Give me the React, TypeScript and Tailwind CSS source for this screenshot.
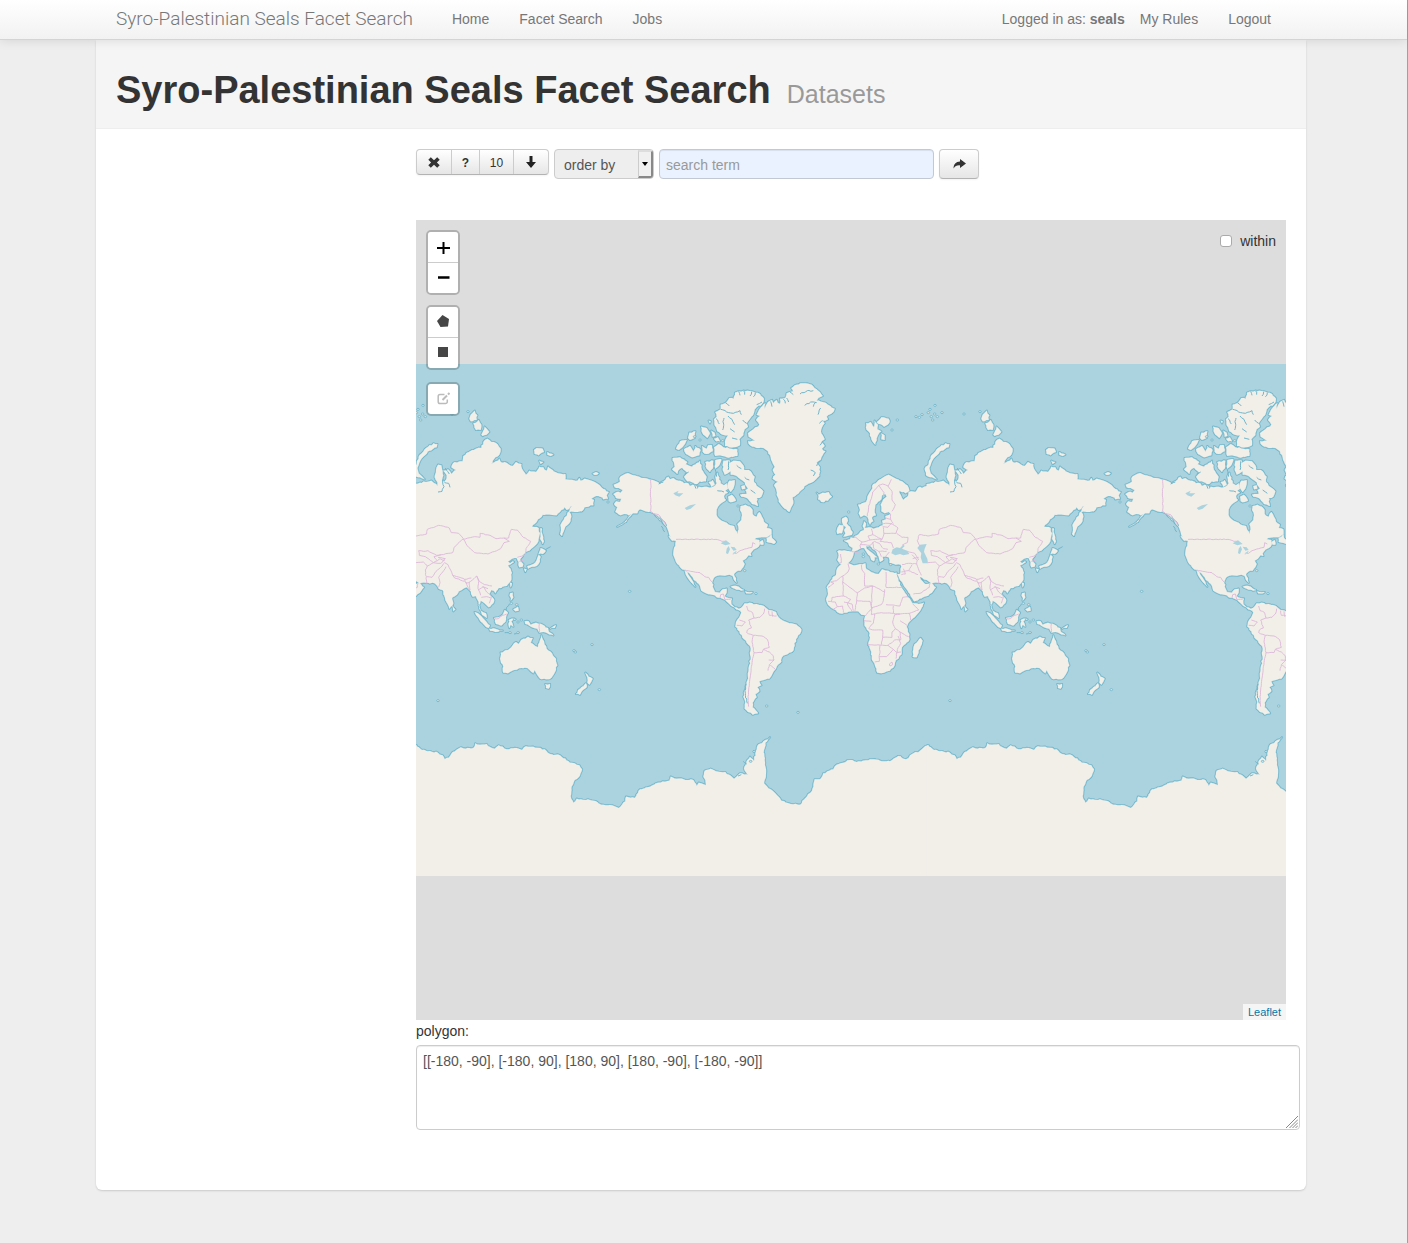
import React from "react";

type Segment = [dx: number, dy: number, points: string];

// Map drawing units are thirds of a pixel. Each region has its own origin.
const A = (p: string): Segment => [0, 0, p];
const B = (p: string): Segment => [660, 0, p];
const C = (p: string): Segment => [960, 90, p];
const D = (p: string): Segment => [240, 570, p];
const E = (p: string): Segment => [-570, 990, p];

// Repeatable pseudo-random offset in -1..1, used to roughen coastlines.
function noise(x: number, y: number) {
  const v = Math.sin(x * 12.9898 + y * 78.233) * 43758.5453;
  return (v - Math.floor(v)) * 2 - 1;
}

function toPath(segments: Segment[], close: boolean, rough = 0) {
  const pts: [number, number][] = [];
  segments.forEach(([dx, dy, text]) => {
    const n = text.trim().split(/\s+/).map(Number);
    for (let i = 0; i + 1 < n.length; i += 2) pts.push([n[i] + dx, n[i + 1] + dy]);
  });
  const out: string[] = [];
  pts.forEach(([x, y], i) => {
    out.push(`${x} ${y}`);
    const next = pts[i + 1] ?? (close ? pts[0] : undefined);
    if (!next || !rough) return;
    const length = Math.hypot(next[0] - x, next[1] - y);
    if (length > 150) return;
    const steps = Math.floor(length / 6);
    for (let s = 1; s < steps; s++) {
      const px = x + ((next[0] - x) * s) / steps;
      const py = y + ((next[1] - y) * s) / steps;
      out.push(`${(px + noise(px, py) * rough).toFixed(1)} ${(py + noise(py, px) * rough).toFixed(1)}`);
    }
  });
  return "M" + out.join("L") + (close ? "Z" : "");
}

const land: Segment[][] = [
  // North America
  [A("41 344 60 335 58 325 68 316 84 309 97 315 110 318 130 324 152 329 168 334 180 341 190 334 205 320 210 328 220 324 228 330 240 332 252 340 265 340 270 348 278 344 290 348 292 358 296 350 305 352 320 350 330 353 340 350 350 340 346 320 352 308 358 322 362 340 372 346 380 340 384 356 376 362 384 368 372 378 378 390 366 398 354 410 350 425 352 440 365 452 380 458 392 466 402 468 406 480 414 492 416 478 412 462 424 450 426 436 420 420 422 408 436 404 450 410 458 420 458 432 470 440 478 426 486 440 492 455 504 464 500 474 514 478 514 492 500 502 484 502 468 504 454 514 466 508 478 510 480 522 476 530 462 538 452 550 454 558 446 556 438 566 428 572 434 582 430 592 422 602 408 606 402 612 408 625 410 638 402 630 398 618 388 614 375 617 360 616 345 620 338 632 338 650 345 666 360 668 368 658 380 656 380 668 374 678 386 684 396 686 394 702 404 712 416 716 428 714 420 722 408 718 394 708 386 700 376 690 362 684 350 682 336 674 318 670 304 662 300 648 288 634 278 622 268 610 254 600 240 592 228 576 222 560 221 540 226 520 228 512 220 508 208 496 206 486 200 470 188 458 176 444 162 430 150 425 136 424 120 418 112 430 100 430 86 440 78 456 60 466 52 470 70 460 84 446 96 432 86 436 72 432 62 436 46 426 52 412 42 402 48 394 60 396 64 386 48 384 40 372 50 366 62 368 68 360 56 354 44 352")],
  [A("254 602 262 622 276 640 286 650 280 636 268 618 262 606")],
  [A("478 516 488 510 490 524 482 524")],
  [A("500 504 508 500 512 488 516 504 528 516 522 522 510 518 500 516")],
  [A("206 498 216 500 228 512 216 512")],
  // Greenland
  [A("590 44 610 40 635 44 650 58 668 78 655 84 650 92 668 96 684 104 704 116 696 130 680 140 684 148 668 152 674 160 666 172 664 190 674 208 664 216 674 228 666 236 676 244 668 256 662 270 650 278 660 292 658 318 640 335 620 345 605 360 590 374 578 382 580 400 568 426 552 415 540 400 530 375 528 356 522 346 534 335 518 326 526 314 518 300 524 290 518 280 512 262 504 244 490 234 470 234 450 226 444 214 466 212 446 200 444 190 460 178 478 164 468 150 480 138 470 134 478 118 496 100 494 116 504 96 516 90 520 100 530 90 540 102 540 86 556 84 560 70 580 64 574 54")],
  // Canadian Arctic
  [A("405 68 416 64 430 62 455 64 480 72 492 86 486 102 470 112 462 128 450 146 440 160 444 170 434 178 430 196 418 208 420 226 400 232 375 228 376 210 384 196 368 194 352 184 344 166 342 148 350 140 346 126 362 118 362 104 380 96 388 84 402 86")],
  [A("356 222 370 232 412 238 412 258 380 262 360 256 346 258 342 232")],
  [A("303 170 320 174 330 190 322 204 310 194")],
  [A("334 182 344 188 346 198 338 200")],
  [A("326 152 332 154 330 160")],
  [A("342 206 354 202 360 214 348 214")],
  [A("228 236 240 214 260 210 252 226 236 240")],
  [A("252 238 270 228 282 246 286 228 302 240 298 256 276 262 258 252")],
  [A("264 204 268 188 286 184 284 204 270 210")],
  [A("306 228 320 236 324 226 336 226 338 244 320 252 308 246")],
  [A("216 298 224 290 218 264 240 262 262 276 250 292 240 296 232 312")],
  [A("246 292 256 282 276 290 300 272 306 300 320 320 318 334 300 334 292 342 262 334 252 320 262 308")],
  [A("316 276 340 272 338 296 330 306 320 296")],
  [A("346 270 364 268 358 286 346 296")],
  [A("326 336 338 330 344 344 334 350")],
  [A("370 272 390 272 388 280 400 272 420 274 430 286 432 300 446 300 464 320 462 336 474 350 490 364 484 380 470 384 474 408 456 402 440 384 424 380 420 374 440 372 436 360 444 356 430 334 410 318 392 314 392 304 374 314 368 296")],
  [A("388 332 404 330 402 350 392 366 382 348")],
  [A("424 348 434 346 436 356 426 358")],
  [A("384 380 396 374 408 392 398 396 386 394")],
  // Iceland
  [A("650 368 656 374 668 368 686 366 696 380 684 392 664 396 654 388 656 380")],
  // Caribbean
  [A("392 650 410 648 432 660 424 662 404 656")],
  [A("436 664 458 666 454 670 438 670")],
  // British Isles
  [B("66 446 78 440 84 452 80 460 90 470 98 486 96 494 82 498 70 500 76 490 72 480 78 472 70 466 66 456")],
  [B("52 474 58 464 70 466 70 476 66 490 52 492 50 484")],
  // Eurasia
  [
    B("60 582 52 570 56 556 52 544 66 542 88 543 96 543 98 534 88 528 84 518 72 512 90 508 92 502 104 504 104 498 116 492 122 484 132 480 128 468 132 454 138 460 134 474 146 472 160 476 176 472 188 466 186 452 198 448 196 438 212 432 206 426 194 430 184 424 182 404 190 388 200 380 196 372 186 376 184 388 166 404 164 420 168 436 156 442 160 454 150 464 146 456 142 440 132 436 122 442 116 430 120 420 114 404 126 400 138 396 142 380 154 360 160 342 176 330 190 322 206 314 220 322 240 332 262 346 268 362 256 370 238 362 242 374 250 390 264 378 266 366 286 366 300 350 306 354 320 348 320 342 336 338 354 336 370 332 388 348 388 336 380 322 384 300 390 284 400 286 404 304 404 330 410 340 416 316 406 302 420 298 430 312 444 300 430 292 440 276 464 274 466 258 486 244 504 236 520 234 526 216 538 206 550 216 568 222 578 236 576 250 562 262 548 282 570 272 574 266 578 276 590 276 614 288 624 276 640 282 642 296 654 314 664 302 684 306 694 290 706 292 716 302 720 290 734 300 750 310 772 312"),
    C("472 238 508 242 514 234 518 242 530 236 544 240 560 246 570 252 580 262 602 276 596 286 600 296 586 298 576 290 564 288 550 296 558 300 556 316 530 322 522 334 500 336 484 336 490 350 484 370 472 380 462 408 456 402 460 370 470 352 484 334 492 318 476 330 470 322 456 336 446 346 428 344 404 344 388 362 372 380 392 384 396 400 388 430 370 446 352 458 346 464 336 480 346 492 344 500 334 502 332 486 326 474 312 476 300 484 306 490 314 484 318 486 300 496 312 518 310 540 296 558 272 564 262 574 250 570 244 582 258 598 256 610 242 622 234 614 228 608 218 602 212 616 218 632 234 640 236 654 222 644 214 626 212 606 204 588 194 590 184 570 176 562 164 568 150 580 134 592 134 616 124 626 112 600 104 570 92 566 88 558 80 550 60 548 34 550 20 540 0 530"),
    B("300 616 302 628 316 642 334 638 348 652 336 668 310 682 282 694 276 684 266 668 250 644 236 620 232 612 240 612 244 590 242 584 222 582 208 578 206 562 198 560 188 560 190 570 180 576 176 560 164 540 150 528 138 528 140 536 156 548 172 562 164 562 162 574 154 570 150 558 138 544 132 534 120 536 104 544 100 556 92 572 84 580 68 582"),
  ],
  [B("388 222 376 220 350 238 332 260 326 282 314 296 318 316 336 322 350 328 332 310 328 294 334 278 346 260 364 242 386 232")],
  [B("138 160 152 156 162 172 164 152 174 164 172 178 184 184 172 200 166 224 154 208 150 190 140 180")],
  [B("170 156 184 142 206 146 208 158 192 170")],
  [B("184 190 194 196 194 210 184 208")],
  [B("488 134 500 122 508 136 506 150 488 154 484 146")],
  [B("496 160 512 150 520 164 518 180 504 180")],
  [B("520 194 530 170 544 186 536 194 524 198")],
  [B("678 240 686 234 704 236 708 246 692 256 680 252")],
  [B("718 246 736 254 728 258 718 254")],
  [B("694 272 706 276 698 282")],
  [C("554 221 564 216 572 220 560 225")],
  // Japan and the western Pacific rim
  [C("398 384 402 386 402 400 408 424 404 432 398 420")],
  [C("392 462 398 444 414 452 404 462")],
  [C("392 464 398 470 396 484 386 498 372 500 360 506 358 498 376 492 386 480")],
  [C("348 506 356 508 352 516")],
  [C("306 548 312 550 308 562")],
  [C("258 572 266 572 262 580")],
  [C("306 580 314 578 316 592 308 602")],
  [C("316 628 330 620 332 632 322 634")],
  [C("200 636 210 640 228 658 246 676 242 684 228 674 212 654")],
  [C("244 686 262 686 284 692 262 696 246 692")],
  [C("258 654 272 652 284 644 290 630 300 638 294 652 292 666 282 676 264 672")],
  [C("302 660 310 656 322 658 310 664 316 680 308 674 304 684")],
  [C("350 664 362 664 368 674 384 668 404 674 420 684 422 694 436 706 418 700 406 696 394 698 388 686 372 682 352 672")],
  [C("426 686 444 676 440 684")],
  [C("134 618 142 628 136 634")],
  // Australia and New Zealand
  [C("278 758 300 750 314 736 318 730 324 726 332 732 346 716 352 716 360 710 374 714 368 728 382 738 390 742 396 720 400 706 408 724 416 746 432 760 444 776 448 796 440 818 430 834 414 838 396 836 386 822 380 810 376 820 368 814 358 804 340 804 318 810 300 820 286 818 286 800 276 776")],
  [C("412 852 418 854 426 852 422 866 414 864")],
  [C("532 818 542 830 554 836 544 854 538 848 538 832")],
  [C("534 850 536 862 520 876 516 884 504 882 516 866")],
  // South America
  [D("180 146 194 130 208 128 230 132 252 138 266 150 288 156 296 172 310 182 334 190 350 194 364 208 360 222 348 238 342 262 336 276 318 284 306 292 304 306 290 320 280 336 268 356 252 360 238 364 244 376 232 382 238 394 226 402 230 412 218 428 218 442 234 460 218 464 204 456 194 446 196 426 190 410 200 372 206 330 212 290 210 258 192 238 178 214 166 200 168 186 178 172 184 158")],
  // Africa
  [D("488 8 504 10 520 16 540 12 556 10 560 28 580 38 596 42 606 28 630 36 650 38 652 50 664 80 680 104 698 130 716 132 732 128 722 150 704 172 690 184 680 200 688 222 686 244 666 262 664 284 648 300 644 316 630 332 612 338 592 338 586 320 576 300 574 276 564 254 570 232 566 214 554 198 552 180 556 166 544 164 534 154 516 154 500 158 478 160 462 148 444 134 438 118 444 100 440 82 452 62 468 44 472 24")],
  [D("704 252 722 234 728 242 720 266 710 292 698 290 700 268")],
  // Antarctica
  [
    E("16 136 36 150 60 153 84 158 90 164 98 166 104 178 120 168 128 156 152 142 166 146 190 144 196 130 210 134 230 132 234 138 254 146 266 136 290 148 320 144 336 150 342 142 354 140 370 140 404 148 420 162 450 166 480 188 494 190 508 196 516 208 506 232 494 240 484 264 482 288 490 308 500 296 540 300 562 306 574 314 612 318 626 324 646 304 648 290 674 294 690 268 720 260 744 248 778 242 782 230 800 236 850 240 860 258 866 248 888 256 886 240 880 230 884 212 902 206 918 214 946 216 972 236 990 220 1014 226 1002 206 1012 180 1020 170 1032 184 1036 160 1044 134 1060 124 1080 112 1066 128 1062 150 1064 180 1068 220 1062 250 1092 276 1114 302 1136 310 1170 314 1186 294 1206 272 1214 238 1230 238"),
    D("430 640 460 628 470 614 490 608 510 600 530 606 576 598 600 602 630 604 655 588 666 594 678 598 690 586 700 580 720 572 736 558 746 556 746 960"),
    E("16 560"),
  ],
];

const islets: [number, number][] = [
  [948, 140], [958, 142], [966, 134], [985, 128], [994, 140], [1004, 132], [1012, 140], [1026, 128], [1005, 106], [990, 118], [998, 150],
  [1092, 132], [1140, 125], [892, 150], [876, 180], [746, 426], [790, 552], [790, 560], [835, 582], [872, 584], [89, 664],
  [1050, 992], [1512, 824], [1458, 842], [1462, 846], [1534, 959], [500, 1008], [594, 1027], [462, 1145], [452, 1174], [284, 200], [300, 210], [368, 212],
  [434, 602], [468, 671], [414, 408], [1270, 700], [1286, 704], [1280, 748], [1300, 750], [1290, 756], [1290, 788], [1266, 788], [1560, 396],
];

const inlets: Segment[] = [
  B("404 328 408 350 402 364 390 366"),
  B("410 338 422 340 426 352"),
  C("112 204 124 222"),
  C("294 630 304 612"),
  C("412 450 428 440"),
  C("290 698 310 700"),
  C("318 702 336 696"),
  A("416 64 420 76"), A("430 62 434 74"), A("455 65 450 78"), A("466 68 460 80"), A("376 98 388 108"),
  A("362 118 380 126 400 130 420 122 424 134"), A("384 138 396 148 404 164"), A("390 176 404 186"), A("486 96 470 104"),
  A("348 146 358 162"), A("372 144 368 180"), A("396 204 412 208"), A("440 160 428 150"),
  A("600 72 622 62 640 62"), A("614 106 632 96 650 98"), A("640 110 648 96"), A("654 134 662 114"),
  A("560 84 566 96"), A("550 88 556 100"), A("570 66 580 74"), A("512 94 516 110"), A("632 300 646 308 640 318"), A("660 272 650 288"),
  A("668 214 660 226"), A("668 152 658 160"), A("162 432 178 444 190 460"), A("180 440 190 452 200 468"), A("184 468 194 486"),
  A("190 336 176 342"), A("346 300 350 320"), A("254 312 266 306"), A("386 274 384 300"), A("410 286 424 296"),
  A("434 322 448 330"), A("452 360 466 370"), A("352 362 372 366"), A("284 346 288 356"),
  D("198 372 196 400 202 430"),
  E("1000 184 1010 192"), E("1030 150 1034 158"), E("984 228 994 224"),
];

const lakes: Segment[] = [
  B("214 550 218 538 230 532 240 534 250 524 254 528 246 536 262 542 268 552 250 556 240 552 226 556"),
  B("292 534 300 524 320 522 314 536 312 546 322 566 324 580 308 580 302 562 304 550"),
  A("362 520 378 511 392 522 376 526"),
  A("386 528 390 538 384 552 378 550 380 536"),
  A("392 530 404 532 410 540 400 542"),
  A("398 550 410 542 408 548"),
  A("254 414 270 406 288 402 272 416 260 420"),
  A("220 370 236 362 232 370 250 370 238 380 226 376"),
];

const borders: Segment[] = [
  // The Americas
  A("152 329 152 425 162 432 176 434 184 446 200 466"),
  A("228 508 348 508 366 514 378 514"),
  A("398 552 410 550 420 542 440 536 456 532 458 518 466 522"),
  A("254 600 272 604 300 608 314 620 326 622 336 636"),
  A("360 684 362 674 370 672 374 688 392 688"),
  D("200 138 204 152 218 158 222 174 240 172 250 162 254 146"),
  D("266 152 268 166 290 168"), D("276 154 278 170"), D("222 174 206 180 214 204 202 210 200 218 220 226"),
  D("170 196 186 198 196 186 178 180"), D("220 226 246 228 262 238 268 262 250 268 246 278 222 278"),
  D("220 226 216 246 222 278 214 320 208 370 204 410 206 440"), D("250 268 268 276 280 288 282 300 266 300"), D("282 300 268 314 264 332"), D("270 314 286 328"),
  // Africa
  D("452 66 470 62 488 48 504 36 508 26 504 12"), D("488 48 490 108 456 112 454 124"), D("452 66 462 70 444 82"), D("488 66 532 98 554 84 578 78"),
  D("544 14 546 30 554 40 554 78 578 78 614 96 614 88"), D("618 36 618 82 668 82"), D("614 96 610 122 604 134 574 144 576 98 578 78"), D("618 134 660 138 668 112 684 110"),
  D("532 98 530 122 570 124"), D("530 122 524 156"), D("490 108 512 118 502 132 516 154"), D("444 124 466 126 472 140 460 148"), D("472 140 488 138 490 158"),
  D("492 126 516 132 520 152"), D("570 124 576 144 556 168"), D("576 144 574 164 604 158 640 160 640 138"), D("584 162 580 190 566 204"), D("552 182 574 184"),
  D("566 206 584 210 608 210 608 232 636 232 636 216 646 206 638 186 644 164 660 162"), D("640 160 660 162 688 160 692 180"), D("688 160 716 150 698 132"), D("660 182 684 198"),
  D("646 206 660 216 686 230"), D("564 254 624 256 644 240 662 240 660 216"), D("608 232 604 254"), D("600 256 598 304 584 306"), D("598 290 620 290 640 268 624 256"),
  D("640 268 652 278 664 276"), D("654 228 662 250 652 268 648 296"), D("628 312 636 306 638 314 630 318 628 312"),
  // Europe
  B("62 552 64 578 56 580"), B("88 543 122 550"), B("104 500 116 510 126 516 120 526 122 536"), B("154 476 158 494 144 498 150 510 126 516"), B("158 494 186 508 192 492 190 472"),
  B("122 524 150 526 164 514 178 520 190 536 204 538"), B("186 508 180 514 214 518 220 534"), B("150 510 166 508 186 508"), B("158 516 160 534 176 544 184 560"), B("176 544 200 544"), B("196 562 208 546"),
  B("142 438 146 408 154 386 158 366 176 346 188 342 204 348 214 328"), B("176 346 192 368 190 378"), B("204 348 216 364 216 390 226 404 216 424"),
  B("198 444 212 448 212 432"), B("186 460 204 460 216 462"), B("188 470 204 472 214 460 234 474 228 490 192 490"), B("230 490 246 502 264 502 262 518 246 526"), B("212 448 220 460"),
  // Middle East and Asia
  B("246 584 266 580 290 582 292 570 276 554"), B("262 544 284 550 296 570"), B("278 566 296 562"), B("244 606 266 602 276 584"), B("244 614 256 612 250 596"), B("266 602 294 614"), B("290 582 298 604 304 616"),
  B("280 672 300 670 328 652 330 640"),
  B("300 534 292 512 298 494 324 498 356 492 358 478 392 466 424 474 430 488 452 490 466 506 450 520 438 532 434 548 400 554 386 556 360 542 346 544 332 542"),
  B("332 542 334 556 352 560 376 578 388 572 378 560 400 554"), B("324 578 346 576 358 588 376 578 398 580 412 566 390 562"),
  B("358 588 352 600 356 640"), B("356 620 372 622 384 604 398 592 410 578 420 584 428 600"), B("392 652 396 638 392 622 404 606 414 590"), B("388 572 396 566 410 572"),
  B("466 508 500 500 516 502 516 490 546 496 564 506 588 504 604 514 588 518 578 536 540 552 500 548 482 532 466 508"),
  B("588 504 602 504 610 478 628 480 646 502 668 514 654 536 652 554 628 562"),
  B("428 600 434 616 470 628 474 640 488 634 506 618 514 634 530 644 552 648"), B("434 616 440 624 470 634"), B("470 628 490 624"), B("474 636 480 652 486 660 484 636"),
  B("506 618 512 634 510 656 518 676"), B("510 660 526 650 536 666 550 678 544 700"), B("520 682 536 680 548 684"), B("524 650 540 656"),
  C("260 656 272 656 284 646 296 642"), C("394 672 394 698"), C("334 484 346 480"),
];

const landPaths = land.map((s) => toPath(s, true, 2));
const inletPath = inlets.map((s) => toPath([s], false, 2)).join("");
const lakePath = lakes.map((s) => toPath([s], true)).join("");
const borderPath = borders.map((s) => toPath([s], false, 1)).join("");
const repeats = [-1536, 0, 1536];

function WorldMap() {
  return (
    <svg
      className="block h-[512px] w-full bg-[#aad3df]"
      viewBox="-552 -18 2610 1536"
      preserveAspectRatio="xMidYMid slice"
      role="img"
      aria-label="World map"
    >
      <defs>
        <g id="coast">
          {landPaths.map((d, i) => (
            <path key={i} d={d} />
          ))}
        </g>
        <g id="detail">
          <path d={inletPath} fill="none" stroke="#6fb6cb" strokeWidth="3" />
          <path d={lakePath} fill="#aad3df" />
          {islets.map(([x, y], i) => (
            <ellipse key={i} cx={x} cy={y} rx="4" ry="3" fill="#e2e8e4" stroke="#6fb6cb" strokeWidth="2.6" />
          ))}
          <path d={borderPath} fill="none" stroke="#deb9da" strokeWidth="2.8" />
        </g>
      </defs>
      <g fill="none" stroke="#6fb6cb" strokeWidth="6.6" strokeLinejoin="round">
        {repeats.map((x) => (
          <use key={x} href="#coast" x={x} />
        ))}
      </g>
      <g fill="#f2efe9" stroke="#f2efe9" strokeWidth="1">
        {repeats.map((x) => (
          <use key={x} href="#coast" x={x} />
        ))}
      </g>
      {repeats.map((x) => (
        <use key={x} href="#detail" x={x} />
      ))}
    </svg>
  );
}

const smallButton =
  "flex h-full items-center justify-center border-r border-[#ccc] text-[12px] text-[#333] last:border-r-0";
const mapButton = "flex h-[30px] w-[30px] items-center justify-center bg-white";
const mapBar = "w-[34px] overflow-hidden rounded-[5px] border-2 border-black/20 bg-clip-padding";
const navLink = "px-[15px] text-[14px] leading-5 text-[#777]";

function MapControls() {
  return (
    <div className="absolute top-2.5 left-2.5 flex flex-col gap-2.5">
      <div className={mapBar}>
        <button type="button" aria-label="Zoom in" className={`${mapButton} h-[31px] border-b border-[#ccc]`}>
          <svg width="16" height="16" viewBox="0 0 16 16" stroke="#000" strokeWidth="2">
            <path d="M2 9h13M8.500 3v12" />
          </svg>
        </button>
        <button type="button" aria-label="Zoom out" className={mapButton}>
          <svg width="14" height="14" viewBox="0 0 14 14" stroke="#000" strokeWidth="2.500">
            <path d="M2 6.500h11.500" />
          </svg>
        </button>
      </div>
      <div className={mapBar}>
        <button type="button" aria-label="Draw a polygon" className={`${mapButton} h-[31px] border-b border-[#ccc] pb-0.5`}>
          <svg width="12" height="12" viewBox="0 0 12 12" fill="#464646">
            <path d="M5.500 0l6.500 4-1 7.500-7.500.5L0 6z" />
          </svg>
        </button>
        <button type="button" aria-label="Draw a rectangle" className={`${mapButton} pb-0.5`}>
          <span className="size-2.5 bg-[#464646]" />
        </button>
      </div>
      <div className={`${mapBar} mt-0.5`}>
        <button type="button" disabled aria-label="Edit layers" className={`${mapButton} bg-[#f4f4f4] pb-0.5`}>
          <svg width="13" height="13" viewBox="0 0 13 13" fill="none" stroke="#bbb" strokeWidth="1.500">
            <path d="M7.500 2.500H3A1.800 1.800 0 0 0 1.200 4.300v5.400A1.800 1.800 0 0 0 3 11.500h5.500a1.800 1.800 0 0 0 1.800-1.800V7.500" />
            <path d="M5.500 8L10 3.500" strokeWidth="2" />
            <path d="M11 2.500l1.500-1.500" strokeWidth="2" />
          </svg>
        </button>
      </div>
    </div>
  );
}

export default function App() {
  return (
    <div className="min-h-screen border-r border-[#a0a0a0] bg-[#eee] font-['Liberation_Sans',Arial,sans-serif] text-[14px] leading-5 text-[#333]">
      <header className="relative z-10 h-10 border-b border-[#d4d4d4] bg-linear-to-b from-white to-[#f2f2f2] pr-[5px] pb-0.5 shadow-[0_1px_10px_rgba(0,0,0,0.1)]">
        <div className="mx-auto flex h-full max-w-[1170px] items-center justify-between">
          <nav className="flex items-center">
            <a href="#" className="mr-6 font-[Roboto,sans-serif] text-[19px] leading-5 font-light whitespace-nowrap text-[#777]">
              Syro-Palestinian Seals Facet Search
            </a>
            <a href="#" className={navLink}>Home</a>
            <a href="#" className={navLink}>Facet Search</a>
            <a href="#" className={navLink}>Jobs</a>
          </nav>
          <div className="flex items-center">
            <span className="text-[#777]">
              Logged in as: <b>seals</b>
            </span>
            <a href="#" className={navLink}>My Rules</a>
            <a href="#" className={navLink}>Logout</a>
          </div>
        </div>
      </header>

      <div className="pr-[5px]">
        <main className="mx-auto max-w-[1210px] overflow-hidden rounded-b-md bg-white pb-[60px] shadow-[0_1px_2px_rgba(0,0,0,0.15)]">
          <div className="border-b border-[#eee] bg-[#f5f5f5] px-5 pt-[30px] pb-[18px]">
            <h1 className="flex items-baseline gap-4 text-[38px] leading-10 font-bold text-[#333]">
              Syro-Palestinian Seals Facet Search
              <small className="text-[25px] leading-none font-normal text-[#999]">Datasets</small>
            </h1>
          </div>

          <div className="pt-5 pr-5 pl-80">
            <form className="flex items-start gap-[5px]" onSubmit={(e) => e.preventDefault()}>
              <div className="flex h-[26px] w-[133px] overflow-hidden rounded-sm border border-[#ccc] border-b-[#b3b3b3] bg-linear-to-b from-white to-[#e6e6e6] shadow-[0_1px_2px_rgba(0,0,0,0.05)]">
                <button type="button" aria-label="Clear" className={`${smallButton} w-[35px]`}>
                  <svg width="12" height="11" viewBox="0 0 12 11" fill="#333">
                    <path d="M2.800.3L6 3.200 9.200.3l2.500 2.400L8.900 5.500l2.800 2.800-2.500 2.400L6 7.800l-3.200 2.900L.3 8.300l2.800-2.800L.3 2.700z" />
                  </svg>
                </button>
                <button type="button" className={`${smallButton} w-[28px] pt-0.5 font-bold`}>?</button>
                <button type="button" className={`${smallButton} w-[34px] pt-0.5`}>10</button>
                <button type="button" aria-label="Sort descending" className={`${smallButton} flex-1`}>
                  <svg width="10" height="12" viewBox="0 0 10 12" fill="#222">
                    <path d="M3.500 0h3v6H10l-5 6-5-6h3.500z" />
                  </svg>
                </button>
              </div>
              <div className="relative h-[30px] w-[100px]">
                <select
                  aria-label="Order by"
                  className="h-full w-full appearance-none rounded-sm border border-[#ccc] bg-[#eee] pt-0.5 pl-[9px] text-[14px] text-[#555]"
                >
                  <option>order by</option>
                </select>
                <span className="pointer-events-none absolute top-px right-px bottom-px flex w-[15px] items-center justify-center rounded-r-[3px] border-t-2 border-r-2 border-b-2 border-l border-t-[#ddd] border-r-[#888] border-b-[#888] border-l-[#ccc] bg-[#f0f0f0]">
                  <svg width="6" height="4" viewBox="0 0 6 4">
                    <path d="M0 0h6L3 4z" />
                  </svg>
                </span>
              </div>
              <input
                type="text"
                aria-label="Search term"
                placeholder="search term"
                className="h-[30px] w-[275px] rounded-sm border border-[#c3c9d4] bg-[#eaf2ff] px-1.5 pt-0.5 text-[14px] text-[#555] shadow-[inset_0_1px_1px_rgba(0,0,0,0.075)] placeholder:text-[#999]"
              />
              <button
                type="submit"
                aria-label="Search"
                className="flex h-[30px] w-10 items-center justify-center rounded-sm border border-[#ccc] border-b-[#b3b3b3] bg-linear-to-b from-white to-[#e6e6e6] shadow-[0_1px_2px_rgba(0,0,0,0.05)]"
              >
                <svg width="13" height="10" viewBox="0 0 13 10" fill="#333">
                  <path d="M7 0l6 4.500L7 9V6.400C4 6.200 2 7 .6 9.500.3 5.500 3 2.700 7 2.600z" />
                </svg>
              </button>
            </form>

            <section className="relative mt-[41px] flex h-[800px] items-center bg-[#ddd]">
              <WorldMap />
              <MapControls />
              <label className="absolute top-[11px] right-2.5 flex items-center gap-2 text-[14px] leading-5">
                <input
                  type="checkbox"
                  className="size-3 appearance-none rounded-[3px] border border-[#aaa] bg-white checked:bg-[#0078a8]"
                />
                within
              </label>
              <a href="#" className="absolute right-0 bottom-0 bg-white/70 px-[5px] text-[11px] leading-4 text-[#0078a8]">
                Leaflet
              </a>
            </section>

            <label htmlFor="polygon" className="mt-px mb-1 block">
              polygon:
            </label>
            <div className="relative -mr-3.5">
              <textarea
                id="polygon"
                className="block h-[85px] w-full resize-none rounded-sm border border-[#ccc] bg-white px-1.5 pt-[5px] text-[14px] leading-5 text-[#555] shadow-[inset_0_1px_1px_rgba(0,0,0,0.075)]"
                defaultValue="[[-180, -90], [-180, 90], [180, 90], [180, -90], [-180, -90]]"
              />
              <svg
                className="pointer-events-none absolute right-0.5 bottom-0.5"
                width="12"
                height="12"
                viewBox="0 0 12 12"
                stroke="#888"
              >
                <path d="M0 12L12 0M3.500 12L12 3.500M6.500 12L12 6.500M9.500 12L12 9.500" />
              </svg>
            </div>
          </div>
        </main>
      </div>
    </div>
  );
}
